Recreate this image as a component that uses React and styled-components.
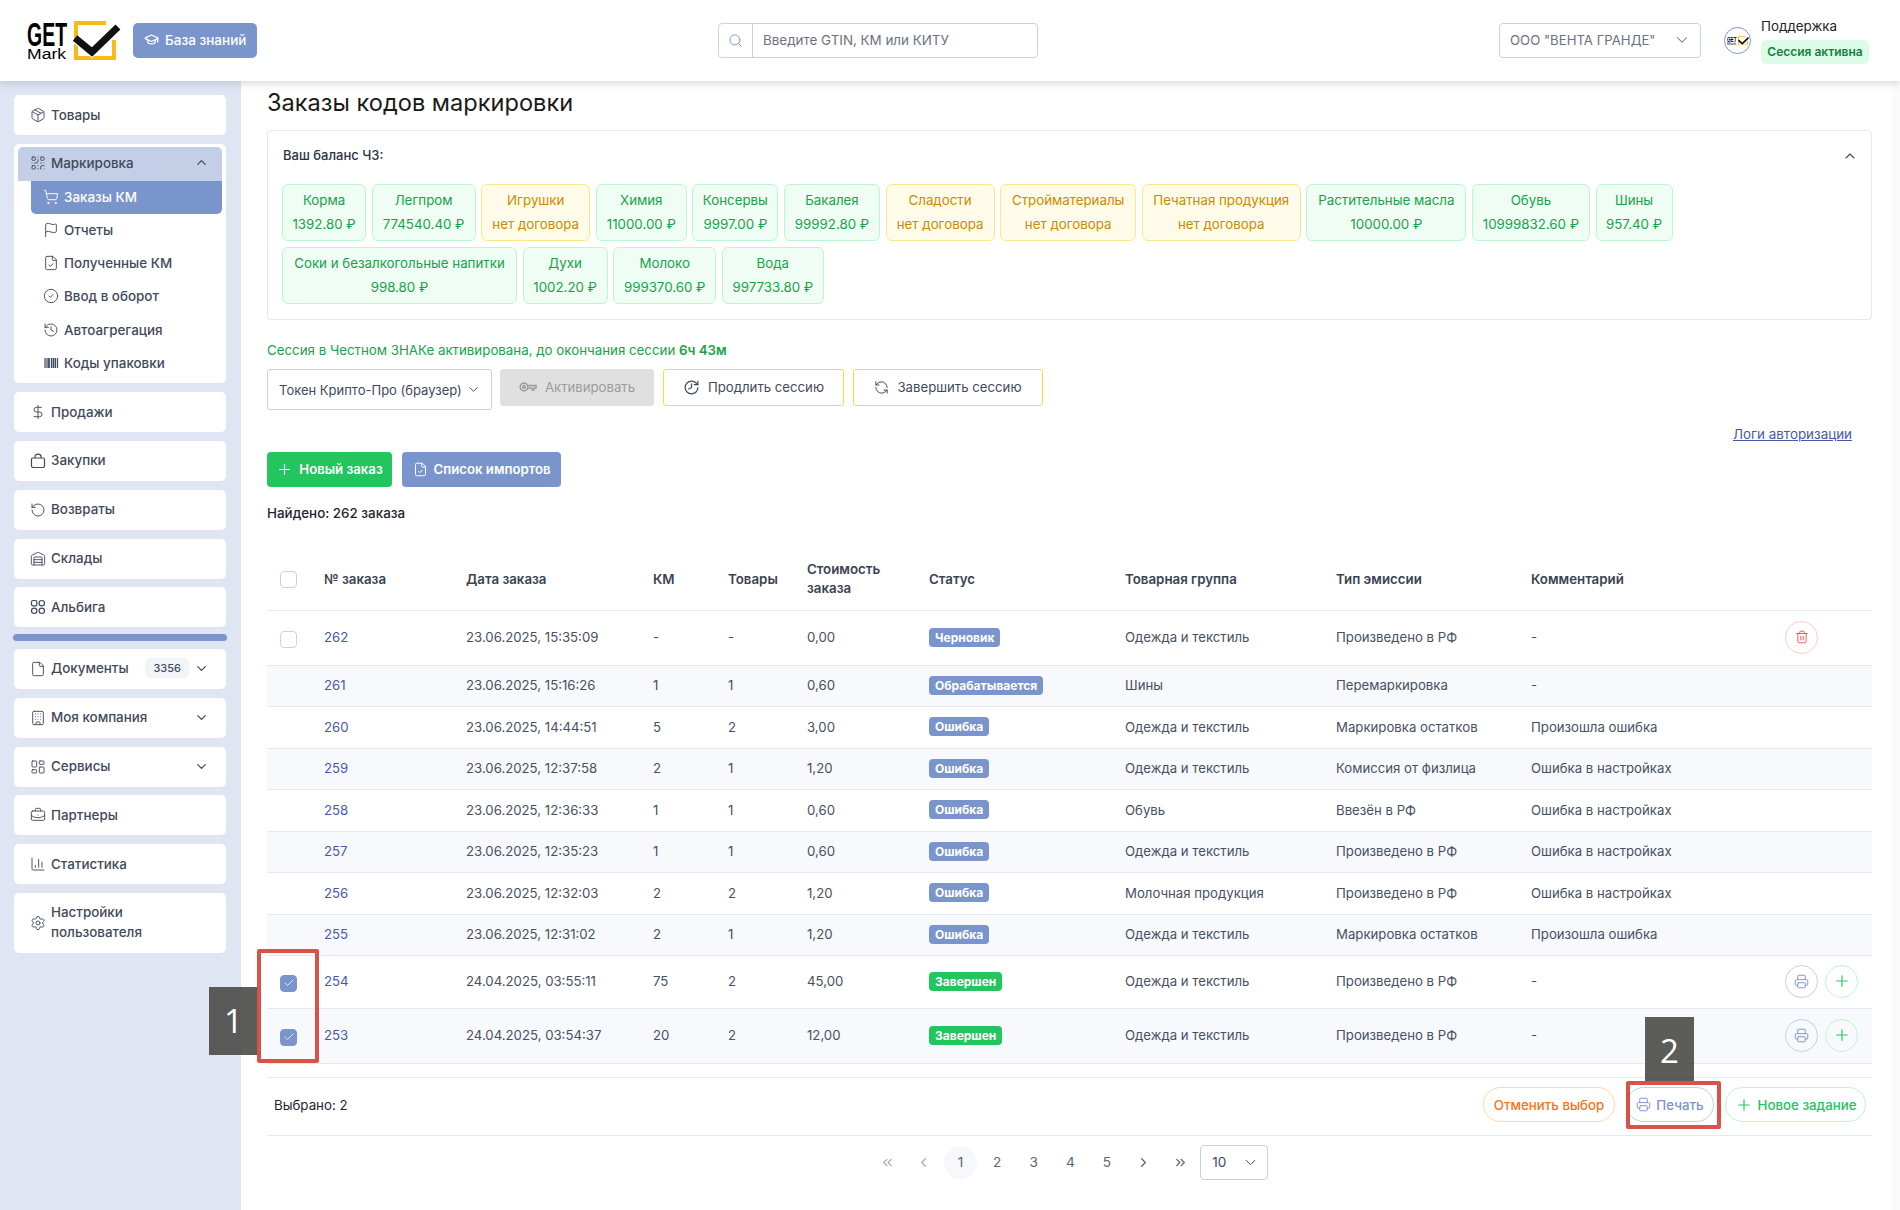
import React from "react";
import styled, { createGlobalStyle } from "styled-components";
import {
  BriefcaseBusiness,
  Building,
  ChartColumn,
  Check,
  ChevronDown,
  ChevronLeft,
  ChevronRight,
  ChevronsLeft,
  ChevronsRight,
  ChevronUp,
  CircleCheck,
  DollarSign,
  File,
  FileCheck,
  Flag,
  GraduationCap,
  History,
  LayoutDashboard,
  Package,
  Plus,
  Printer,
  QrCode,
  RefreshCcw,
  RotateCcw,
  Search,
  Settings,
  ShoppingCart,
  Trash2,
  Warehouse,
} from "lucide-react";

const FONT = `Inter, "Noto Sans", sans-serif`;

const GlobalStyle = createGlobalStyle`
  html, body {
    margin: 0;
    padding: 0;
    background: #fff;
  }
  * {
    box-sizing: border-box;
  }
`;

const Page = styled.div`
  position: relative;
  width: 1900px;
  height: 1210px;
  overflow: hidden;
  font-family: ${FONT};
  font-size: 14px;
  color: #3f4a5c;
  background: #fff;
`;

const Header = styled.header`
  position: relative;
  z-index: 2;
  display: flex;
  align-items: flex-start;
  height: 81px;
  padding: 23px 31px 0 27px;
  background: #fff;
  box-shadow: 0 2px 8px rgba(60, 70, 90, 0.22);
`;

const LeftGroup = styled.div`
  display: flex;
  align-items: flex-start;
  gap: 13px;
  width: 691px;
`;

const LogoWrap = styled.div`
  margin-top: -3px;

  svg {
    display: block;
    overflow: visible;
  }
`;

const KnowledgeButton = styled.button`
  display: flex;
  align-items: center;
  gap: 6px;
  width: 124px;
  height: 35px;
  padding: 0 0 2px 11px;
  border: none;
  border-radius: 5px;
  background: #7a95cc;
  color: #fff;
  font-family: ${FONT};
  font-size: 13.5px;
  font-weight: 500;
`;

const SearchBox = styled.div`
  display: flex;
  align-items: center;
  width: 320px;
  height: 35px;
  border: 1px solid #c9d2e3;
  border-radius: 4px;
  color: #6b7280;
`;

const SearchIcon = styled.div`
  display: flex;
  align-items: center;
  justify-content: center;
  flex: none;
  width: 34px;
  height: 100%;
  border-right: 1px solid #c9d2e3;
  color: #7a95cc;
`;

const SearchText = styled.span`
  padding: 0 0 2px 10px;
  font-size: 13.4px;
`;

const CompanySelect = styled.div`
  display: flex;
  align-items: center;
  justify-content: space-between;
  width: 202px;
  height: 35px;
  margin-left: auto;
  padding: 0 9px 2px 10px;
  border: 1px solid #c9d2e3;
  border-radius: 4px;
  color: #6b7280;
  font-size: 13.2px;
`;

const Avatar = styled.div`
  display: flex;
  align-items: center;
  justify-content: center;
  flex: none;
  width: 27px;
  height: 27px;
  margin: 4px 10px 0 23px;
  border: 1px solid #7a95cc;
  border-radius: 50%;
`;

const Support = styled.div`
  display: flex;
  flex-direction: column;
  margin-top: -5px;
  color: #222;
  font-size: 13.4px;
  line-height: 17px;
`;

const SessionBadge = styled.span`
  display: flex;
  align-items: center;
  justify-content: center;
  width: 108px;
  height: 24px;
  margin-top: 5px;
  padding-bottom: 1px;
  border-radius: 6px;
  background: #dcfce7;
  color: #15803d;
  font-size: 12px;
  font-weight: 600;
`;

const Body = styled.div`
  display: flex;
  height: 1129px;
`;

const Sidebar = styled.nav`
  display: flex;
  flex: none;
  flex-direction: column;
  gap: 8.8px;
  width: 241px;
  padding: 14px 14px 0;
  background: #dfe5f2;
`;

const NavCard = styled.div`
  display: flex;
  align-items: center;
  flex: none;
  gap: 5px;
  width: 212px;
  height: ${(p) => (p.$tall ? "60px" : "40px")};
  padding: 0 17px 1px 16px;
  border-radius: 5px;
  background: #fff;
  color: #3f4a5c;
  font-size: 13.4px;
  font-weight: 500;
  line-height: 20px;

  svg {
    margin-top: 1px;
  }
`;

const NavLabel = styled.span`
  flex: 1;
`;

const Counter = styled.span`
  padding: 2px 8px;
  border-radius: 5px;
  background: #f1f4f9;
  font-size: 11px;
  line-height: 16px;
`;

const NavGroup = styled.div`
  display: flex;
  flex: none;
  flex-direction: column;
  width: 212px;
  height: 239.6px;
  padding: 3px 4px;
  border-radius: 5px;
  background: #fff;
`;

const GroupHead = styled.div`
  display: flex;
  align-items: center;
  flex: none;
  gap: 5px;
  height: 34px;
  padding: 0 13px 2px 12px;
  border-radius: 5px 5px 0 0;
  background: #c3cfe6;
  font-size: 13.4px;
  font-weight: 500;
`;

const SubItem = styled.div`
  display: flex;
  align-items: center;
  flex: none;
  gap: 5px;
  height: 33.2px;
  margin-left: 13px;
  padding: 0 0 1px 12px;
  border-radius: 0 0 5px 5px;
  background: ${(p) => (p.$active ? "#7a95cc" : "transparent")};
  color: ${(p) => (p.$active ? "#fff" : "#3f4a5c")};
  font-size: 13.4px;
  font-weight: 500;
`;

const SideDivider = styled.div`
  flex: none;
  width: 214px;
  height: 7px;
  margin: -2px -1px -1px;
  border-radius: 4px;
  background: #7a95cc;
`;

const Main = styled.main`
  flex: 1;
  min-width: 0;
  padding: 8px 28px 0 26px;
  box-shadow: inset -8px 0 0 #fbfbfc;
`;

const Title = styled.h1`
  margin: 0;
  color: #1a1a1a;
  font-size: 23.6px;
  font-weight: 400;
  line-height: 28px;
`;

const BalanceCard = styled.section`
  position: relative;
  height: 190px;
  margin-top: 13px;
  padding: 16px 14px 0;
  border: 1px solid #e3e8f1;
  border-radius: 4px;
`;

const BalanceTitle = styled.div`
  padding-left: 1px;
  color: #2b3444;
  font-size: 13px;
  font-weight: 500;
  line-height: 16px;
`;

const Collapse = styled.span`
  position: absolute;
  top: 17px;
  right: 13px;
  color: #3f4a5c;
`;

const Chips = styled.div`
  display: flex;
  flex-wrap: wrap;
  gap: 6px 5.6px;
  margin-top: 21px;
`;

const Chip = styled.div`
  display: flex;
  flex-direction: column;
  align-items: center;
  justify-content: center;
  gap: 6px;
  width: ${(p) => p.$w}px;
  height: 57px;
  padding: 0 0 1px;
  border: 1px solid ${(p) => (p.$warn ? "#fde68a" : "#bbf7d0")};
  border-radius: 6px;
  background: ${(p) => (p.$warn ? "#fefce8" : "#f0fdf4")};
  color: ${(p) => (p.$warn ? "#ca8a04" : "#16a34a")};
  font-size: 13.3px;
  line-height: 18px;
  white-space: nowrap;
`;

const SessionText = styled.div`
  margin-top: 21px;
  color: #16a34a;
  font-size: 13.3px;
  line-height: 18px;

  b {
    font-weight: 600;
  }
`;

const Controls = styled.div`
  display: flex;
  align-items: flex-start;
  gap: 9px;
  margin-top: 10px;
`;

const TokenSelect = styled.div`
  display: flex;
  align-items: center;
  justify-content: space-between;
  flex: none;
  width: 225px;
  height: 41px;
  margin-right: -1px;
  padding: 0 10px 0 11px;
  border: 1px solid #c9ced8;
  border-radius: 3px;
  font-size: 13px;
`;

const TokenText = styled.span`
  width: 184px;
  overflow: hidden;
  white-space: nowrap;
`;

const SessionButton = styled.button`
  display: flex;
  align-items: center;
  justify-content: center;
  gap: 8px;
  width: ${(p) => p.$w}px;
  height: 37px;
  padding: 0 0 1px;
  border: 1px solid ${(p) => (p.$disabled ? "#e0e0e0" : "#fbdc3a")};
  border-radius: 3px;
  background: ${(p) => (p.$disabled ? "#e0e0e0" : "#fff")};
  color: ${(p) => (p.$disabled ? "#9b9b9b" : "#3f4a5c")};
  font-family: ${FONT};
  font-size: 13.2px;
`;

const LogsLink = styled.a`
  display: block;
  margin-top: 15px;
  padding-right: 20px;
  color: #4559a8;
  font-size: 13.4px;
  line-height: 18px;
  text-align: right;
  text-decoration: underline;
`;

const Actions = styled.div`
  display: flex;
  gap: 10px;
  margin-top: 9px;
`;

const ActionButton = styled.button`
  display: flex;
  align-items: center;
  justify-content: center;
  gap: 6px;
  width: ${(p) => p.$w}px;
  height: 35px;
  padding: 0 0 1px;
  border: none;
  border-radius: 4px;
  background: ${(p) => p.$bg};
  color: #fff;
  font-family: ${FONT};
  font-size: 13.2px;
  font-weight: 600;
`;

const Found = styled.div`
  margin-top: 17px;
  color: #1f2430;
  font-size: 13.4px;
  font-weight: 500;
  line-height: 18px;
`;

const Table = styled.table`
  width: 100%;
  margin-top: 30px;
  border-collapse: collapse;
  table-layout: fixed;
`;

const Th = styled.th`
  height: 58px;
  padding: 0 0 3px;
  border-bottom: 1px solid #e3e8f1;
  color: #3a4354;
  font-size: 13.3px;
  font-weight: 600;
  line-height: 19.5px;
  text-align: left;
`;

const Row = styled.tr`
  background: ${(p) => (p.$striped ? "#f8f9fc" : "#fff")};
`;

const Td = styled.td`
  height: ${(p) => p.$h}px;
  padding: 0 0 1px;
  border-bottom: 1px solid #e3e8f1;
  color: #465063;
  font-size: 13.2px;
  white-space: nowrap;
`;

const OrderLink = styled.a`
  color: #4559a8;
`;

const Box = styled.span`
  display: flex;
  align-items: center;
  justify-content: center;
  width: 17px;
  height: 17px;
  margin-left: 13px;
  border: 1px solid ${(p) => (p.$on ? "#7a95cc" : "#ccd3e0")};
  border-radius: 4px;
  background: ${(p) => (p.$on ? "#7a95cc" : "#fff")};
  color: #fff;
`;

const RowBox = styled(Box)`
  margin-top: 4px;
`;

const Badge = styled.span`
  display: inline-block;
  padding: 0 6px;
  border-radius: 4px;
  background: ${(p) => p.$bg};
  color: #fff;
  font-size: 12px;
  font-weight: 700;
  line-height: 19px;
`;

const RowActions = styled.div`
  display: flex;
  gap: 7px;
  padding-left: 20px;
`;

const RoundButton = styled.span`
  display: flex;
  align-items: center;
  justify-content: center;
  width: 33px;
  height: 33px;
  border: 1px solid ${(p) => p.$line};
  border-radius: 50%;
  color: ${(p) => p.$ink};
`;

const SelectionBar = styled.div`
  display: flex;
  align-items: center;
  justify-content: space-between;
  height: 59px;
  margin-top: 13px;
  padding: 0 6px 3px 7px;
  border-top: 1px solid #e3e8f1;
  border-bottom: 1px solid #e3e8f1;
  color: #1f2430;
  font-size: 13.3px;
`;

const BarButtons = styled.div`
  display: flex;
  gap: 11px;
`;

const PillButton = styled.button`
  display: flex;
  align-items: center;
  justify-content: center;
  gap: 5px;
  width: ${(p) => p.$w}px;
  height: 35px;
  padding: 0;
  border: 1px solid ${(p) => p.$line};
  border-radius: 18px;
  background: #fff;
  color: ${(p) => p.$ink};
  font-family: ${FONT};
  font-size: 13.3px;
  font-weight: 500;
`;

const Pagination = styled.div`
  display: flex;
  align-items: center;
  justify-content: center;
  margin-top: 9px;
`;

const PageItem = styled.span`
  display: flex;
  align-items: center;
  justify-content: center;
  width: 33px;
  height: 33px;
  margin-right: 3.6px;
  border-radius: 50%;
  background: ${(p) => (p.$current ? "#f6f8fb" : "transparent")};
  color: ${(p) => (p.$muted ? "#a3abb9" : "#5b6577")};
  font-size: 13.6px;
`;

const PageSize = styled.div`
  display: flex;
  align-items: center;
  justify-content: space-between;
  width: 68px;
  height: 35px;
  padding: 0 8px 0 11px;
  border: 1px solid #c9d2e3;
  border-radius: 4px;
  font-size: 13.6px;
`;

const Marker = styled.div`
  position: absolute;
  left: ${(p) => p.$x}px;
  top: ${(p) => p.$y}px;
  z-index: 3;
  display: flex;
  align-items: center;
  justify-content: center;
  width: ${(p) => p.$w}px;
  height: ${(p) => p.$h}px;
  padding-bottom: 2px;
  background: rgba(70, 70, 66, 0.88);
  color: #fff;
  font-family: "Open Sans", sans-serif;
  font-size: 33px;
`;

const Frame = styled.div`
  position: absolute;
  left: ${(p) => p.$x}px;
  top: ${(p) => p.$y}px;
  z-index: 4;
  width: ${(p) => p.$w}px;
  height: ${(p) => p.$h}px;
  border: 4px solid #d7534a;
  border-radius: 2px;
`;

const LogoText = styled.text`
  font-family: "Liberation Sans", sans-serif;
`;

// значки, которых нет в пакете в нужном виде
const AlbigaIcon = () => (
  <svg width="16" height="16" viewBox="0 0 16 16" fill="none" stroke="currentColor" strokeWidth="1.2">
    <rect x="1.5" y="1.5" width="5.4" height="5.4" rx="1.6" />
    <rect x="9.1" y="1.5" width="5.4" height="5.4" rx="2.7" />
    <rect x="1.5" y="9.1" width="5.4" height="5.4" rx="2.7" />
    <rect x="9.1" y="9.1" width="5.4" height="5.4" rx="2.7" />
  </svg>
);

const BagIcon = () => (
  <svg width="16" height="16" viewBox="0 0 16 16" fill="none" stroke="currentColor" strokeWidth="1.2">
    <rect x="1.5" y="5" width="13" height="9.5" rx="1.4" />
    <path d="M5 5V3.4a3 2.2 0 0 1 6 0V5" />
  </svg>
);

const BarsIcon = () => (
  <svg width="16" height="16" viewBox="0 0 16 16" fill="none" stroke="currentColor">
    <path d="M2 3v10M4 3v10M8.5 3v10M12.5 3v10M14.5 3v10" strokeWidth="1.2" />
    <path d="M6 3v10M10.5 3v10" strokeWidth="1.8" />
  </svg>
);

const KeyIcon = () => (
  <svg width="18" height="12" viewBox="0 0 18 12" fill="none" stroke="currentColor" strokeWidth="1.5">
    <circle cx="5" cy="6" r="3.8" />
    <circle cx="5" cy="6" r="1.2" />
    <path d="M8.8 4.5H17V7h-2v2h-2V7H8.8" />
  </svg>
);

const ProlongIcon = () => (
  <History size={17} strokeWidth={1.7} style={{ transform: "scaleX(-1)" }} />
);

const Logo = ({ width = 93 }) => (
  <svg width={width} height={width * 0.435} viewBox="0 0 93 40.5">
    <LogoText x="0" y="26" fontSize="34" fontWeight="700" textLength="40" lengthAdjust="spacingAndGlyphs">
      GET
    </LogoText>
    <LogoText x="0" y="39.5" fontSize="15.5" textLength="39" lengthAdjust="spacingAndGlyphs">
      Mark
    </LogoText>
    <path d="M79 3H49v35h38V20" fill="none" stroke="#fdb913" strokeWidth="4" />
    <path d="M49 18l16 13L90 8" fill="none" stroke="#fff" strokeWidth="11" />
    <path d="M48 18l17 14L91 7" fill="none" stroke="#111" strokeWidth="7" />
  </svg>
);

const SIDE_TOP = [
  { label: "Продажи", Icon: DollarSign },
  { label: "Закупки", Icon: BagIcon },
  { label: "Возвраты", Icon: RotateCcw },
  { label: "Склады", Icon: Warehouse },
  { label: "Альбига", Icon: AlbigaIcon },
];

const SUB_ITEMS = [
  { label: "Заказы КМ", Icon: ShoppingCart, active: true },
  { label: "Отчеты", Icon: Flag },
  { label: "Полученные КМ", Icon: FileCheck },
  { label: "Ввод в оборот", Icon: CircleCheck },
  { label: "Автоагрегация", Icon: History },
  { label: "Коды упаковки", Icon: BarsIcon },
];

const SIDE_BOTTOM = [
  { label: "Документы", Icon: File, count: "3356", more: true },
  { label: "Моя компания", Icon: Building, more: true },
  { label: "Сервисы", Icon: LayoutDashboard, more: true },
  { label: "Партнеры", Icon: BriefcaseBusiness },
  { label: "Статистика", Icon: ChartColumn },
];

const BALANCES = [
  { name: "Корма", value: "1392.80 ₽", w: 84 },
  { name: "Легпром", value: "774540.40 ₽", w: 104 },
  { name: "Игрушки", value: "нет договора", w: 109, warn: true },
  { name: "Химия", value: "11000.00 ₽", w: 91 },
  { name: "Консервы", value: "9997.00 ₽", w: 86 },
  { name: "Бакалея", value: "99992.80 ₽", w: 96 },
  { name: "Сладости", value: "нет договора", w: 109, warn: true },
  { name: "Стройматериалы", value: "нет договора", w: 136, warn: true },
  { name: "Печатная продукция", value: "нет договора", w: 159, warn: true },
  { name: "Растительные масла", value: "10000.00 ₽", w: 160 },
  { name: "Обувь", value: "10999832.60 ₽", w: 118 },
  { name: "Шины", value: "957.40 ₽", w: 77 },
  { name: "Соки и безалкогольные напитки", value: "998.80 ₽", w: 235 },
  { name: "Духи", value: "1002.20 ₽", w: 85 },
  { name: "Молоко", value: "999370.60 ₽", w: 103 },
  { name: "Вода", value: "997733.80 ₽", w: 102 },
];

const COLUMNS = [57, 142, 187, 75, 79, 122, 196, 211, 195, 234, 107];

const STATUS = {
  draft: ["Черновик", "#7a95cc"],
  work: ["Обрабатывается", "#7a95cc"],
  error: ["Ошибка", "#7a95cc"],
  done: ["Завершен", "#22c55e"],
};

const ORDERS = [
  { h: 55, id: 262, date: "23.06.2025, 15:35:09", km: "-", goods: "-", cost: "0,00", status: "draft", group: "Одежда и текстиль", type: "Произведено в РФ", note: "-", box: "off", acts: "del" },
  { h: 41, id: 261, date: "23.06.2025, 15:16:26", km: "1", goods: "1", cost: "0,60", status: "work", group: "Шины", type: "Перемаркировка", note: "-" },
  { h: 42, id: 260, date: "23.06.2025, 14:44:51", km: "5", goods: "2", cost: "3,00", status: "error", group: "Одежда и текстиль", type: "Маркировка остатков", note: "Произошла ошибка" },
  { h: 41, id: 259, date: "23.06.2025, 12:37:58", km: "2", goods: "1", cost: "1,20", status: "error", group: "Одежда и текстиль", type: "Комиссия от физлица", note: "Ошибка в настройках" },
  { h: 42, id: 258, date: "23.06.2025, 12:36:33", km: "1", goods: "1", cost: "0,60", status: "error", group: "Обувь", type: "Ввезён в РФ", note: "Ошибка в настройках" },
  { h: 41, id: 257, date: "23.06.2025, 12:35:23", km: "1", goods: "1", cost: "0,60", status: "error", group: "Одежда и текстиль", type: "Произведено в РФ", note: "Ошибка в настройках" },
  { h: 42, id: 256, date: "23.06.2025, 12:32:03", km: "2", goods: "2", cost: "1,20", status: "error", group: "Молочная продукция", type: "Произведено в РФ", note: "Ошибка в настройках" },
  { h: 41, id: 255, date: "23.06.2025, 12:31:02", km: "2", goods: "1", cost: "1,20", status: "error", group: "Одежда и текстиль", type: "Маркировка остатков", note: "Произошла ошибка" },
  { h: 53, id: 254, date: "24.04.2025, 03:55:11", km: "75", goods: "2", cost: "45,00", status: "done", group: "Одежда и текстиль", type: "Произведено в РФ", note: "-", box: "on", acts: "print" },
  { h: 55, id: 253, date: "24.04.2025, 03:54:37", km: "20", goods: "2", cost: "12,00", status: "done", group: "Одежда и текстиль", type: "Произведено в РФ", note: "-", box: "on", acts: "print" },
];

const HEADS = ["№ заказа", "Дата заказа", "КМ", "Товары", "Стоимость заказа", "Статус", "Товарная группа", "Тип эмиссии", "Комментарий"];

const App = () => (
  <Page>
    <GlobalStyle />
    <Header>
      <LeftGroup>
        <LogoWrap>
          <Logo />
        </LogoWrap>
        <KnowledgeButton>
          <GraduationCap size={15} />
          База знаний
        </KnowledgeButton>
      </LeftGroup>
      <SearchBox>
        <SearchIcon>
          <Search size={15} strokeWidth={1.5} />
        </SearchIcon>
        <SearchText>Введите GTIN, КМ или КИТУ</SearchText>
      </SearchBox>
      <CompanySelect>
        ООО "ВЕНТА ГРАНДЕ"
        <ChevronDown size={18} strokeWidth={1.4} />
      </CompanySelect>
      <Avatar>
        <Logo width={22} />
      </Avatar>
      <Support>
        Поддержка
        <SessionBadge>Сессия активна</SessionBadge>
      </Support>
    </Header>

    <Body>
      <Sidebar>
        <NavCard>
          <Package size={16} strokeWidth={1.4} />
          <NavLabel>Товары</NavLabel>
        </NavCard>
        <NavGroup>
          <GroupHead>
            <QrCode size={16} strokeWidth={1.4} />
            <NavLabel>Маркировка</NavLabel>
            <ChevronUp size={15} strokeWidth={2} />
          </GroupHead>
          {SUB_ITEMS.map(({ label, Icon, active }) => (
            <SubItem key={label} $active={active}>
              <Icon size={16} strokeWidth={1.4} />
              {label}
            </SubItem>
          ))}
        </NavGroup>
        {SIDE_TOP.map(({ label, Icon }) => (
          <NavCard key={label}>
            <Icon size={16} strokeWidth={1.4} />
            <NavLabel>{label}</NavLabel>
          </NavCard>
        ))}
        <SideDivider />
        {SIDE_BOTTOM.map(({ label, Icon, count, more }) => (
          <NavCard key={label}>
            <Icon size={16} strokeWidth={1.4} />
            <NavLabel>{label}</NavLabel>
            {count && <Counter>{count}</Counter>}
            {more && <ChevronDown size={15} strokeWidth={2} />}
          </NavCard>
        ))}
        <NavCard $tall>
          <Settings size={16} strokeWidth={1.4} />
          <NavLabel>
            Настройки
            <br />
            пользователя
          </NavLabel>
        </NavCard>
      </Sidebar>

      <Main>
        <Title>Заказы кодов маркировки</Title>

        <BalanceCard>
          <BalanceTitle>Ваш баланс ЧЗ:</BalanceTitle>
          <Collapse>
            <ChevronUp size={16} strokeWidth={1.6} />
          </Collapse>
          <Chips>
            {BALANCES.map(({ name, value, w, warn }) => (
              <Chip key={name} $w={w} $warn={warn}>
                <span>{name}</span>
                <span>{value}</span>
              </Chip>
            ))}
          </Chips>
        </BalanceCard>

        <SessionText>
          Сессия в Честном ЗНАКе активирована, до окончания сессии <b>6ч 43м</b>
        </SessionText>

        <Controls>
          <TokenSelect>
            <TokenText>Токен Крипто-Про (браузер)</TokenText>
            <ChevronDown size={15} strokeWidth={1.5} />
          </TokenSelect>
          <SessionButton $w={154} $disabled>
            <KeyIcon />
            Активировать
          </SessionButton>
          <SessionButton $w={181}>
            <ProlongIcon />
            Продлить сессию
          </SessionButton>
          <SessionButton $w={190}>
            <RefreshCcw size={15} strokeWidth={1.6} />
            Завершить сессию
          </SessionButton>
        </Controls>

        <LogsLink>Логи авторизации</LogsLink>

        <Actions>
          <ActionButton $w={125} $bg="#22c55e">
            <Plus size={17} strokeWidth={1.6} />
            Новый заказ
          </ActionButton>
          <ActionButton $w={159} $bg="#7a95cc">
            <FileCheck size={15} strokeWidth={1.6} />
            Список импортов
          </ActionButton>
        </Actions>

        <Found>Найдено: 262 заказа</Found>

        <Table>
          <colgroup>
            {COLUMNS.map((w, i) => (
              <col key={i} width={w} />
            ))}
          </colgroup>
          <thead>
            <tr>
              <Th>
                <Box />
              </Th>
              {HEADS.map((h) => (
                <Th key={h}>{h === "Стоимость заказа" ? <>Стоимость<br />заказа</> : h}</Th>
              ))}
              <Th />
            </tr>
          </thead>
          <tbody>
            {ORDERS.map((o, i) => (
              <Row key={o.id} $striped={i % 2 === 1}>
                <Td $h={o.h}>{o.box && <RowBox $on={o.box === "on"}>{o.box === "on" && <Check size={12} strokeWidth={1.5} />}</RowBox>}</Td>
                <Td $h={o.h}><OrderLink>{o.id}</OrderLink></Td>
                <Td $h={o.h}>{o.date}</Td>
                <Td $h={o.h}>{o.km}</Td>
                <Td $h={o.h}>{o.goods}</Td>
                <Td $h={o.h}>{o.cost}</Td>
                <Td $h={o.h}><Badge $bg={STATUS[o.status][1]}>{STATUS[o.status][0]}</Badge></Td>
                <Td $h={o.h}>{o.group}</Td>
                <Td $h={o.h}>{o.type}</Td>
                <Td $h={o.h}>{o.note}</Td>
                <Td $h={o.h}>
                  {o.acts === "del" && (
                    <RowActions>
                      <RoundButton $line="#fecaca" $ink="#ef4444"><Trash2 size={14} strokeWidth={1.5} /></RoundButton>
                    </RowActions>
                  )}
                  {o.acts === "print" && (
                    <RowActions>
                      <RoundButton $line="#c3cfe6" $ink="#7a95cc"><Printer size={15} strokeWidth={1.5} /></RoundButton>
                      <RoundButton $line="#bbf7d0" $ink="#22c55e"><Plus size={18} strokeWidth={1.5} /></RoundButton>
                    </RowActions>
                  )}
                </Td>
              </Row>
            ))}
          </tbody>
        </Table>

        <SelectionBar>
          Выбрано: 2
          <BarButtons>
            <PillButton $w={132} $line="#fed7aa" $ink="#f97316">Отменить выбор</PillButton>
            <PillButton $w={88} $line="#c3cfe6" $ink="#7a95cc">
              <Printer size={15} strokeWidth={1.5} />
              Печать
            </PillButton>
            <PillButton $w={141} $line="#bbf7d0" $ink="#22c55e">
              <Plus size={18} strokeWidth={1.5} />
              Новое задание
            </PillButton>
          </BarButtons>
        </SelectionBar>

        <Pagination>
          <PageItem $muted><ChevronsLeft size={15} /></PageItem>
          <PageItem $muted><ChevronLeft size={15} /></PageItem>
          <PageItem $current>1</PageItem>
          <PageItem>2</PageItem>
          <PageItem>3</PageItem>
          <PageItem>4</PageItem>
          <PageItem>5</PageItem>
          <PageItem><ChevronRight size={15} /></PageItem>
          <PageItem><ChevronsRight size={15} /></PageItem>
          <PageSize>
            10
            <ChevronDown size={17} strokeWidth={1.4} />
          </PageSize>
        </Pagination>
      </Main>
    </Body>

    <Marker $x={209} $y={987} $w={49} $h={68}>1</Marker>
    <Frame $x={257} $y={949} $w={62} $h={114} />
    <Marker $x={1645} $y={1017} $w={49} $h={68}>2</Marker>
    <Frame $x={1626} $y={1081} $w={95} $h={48} />
  </Page>
);

export default App;
